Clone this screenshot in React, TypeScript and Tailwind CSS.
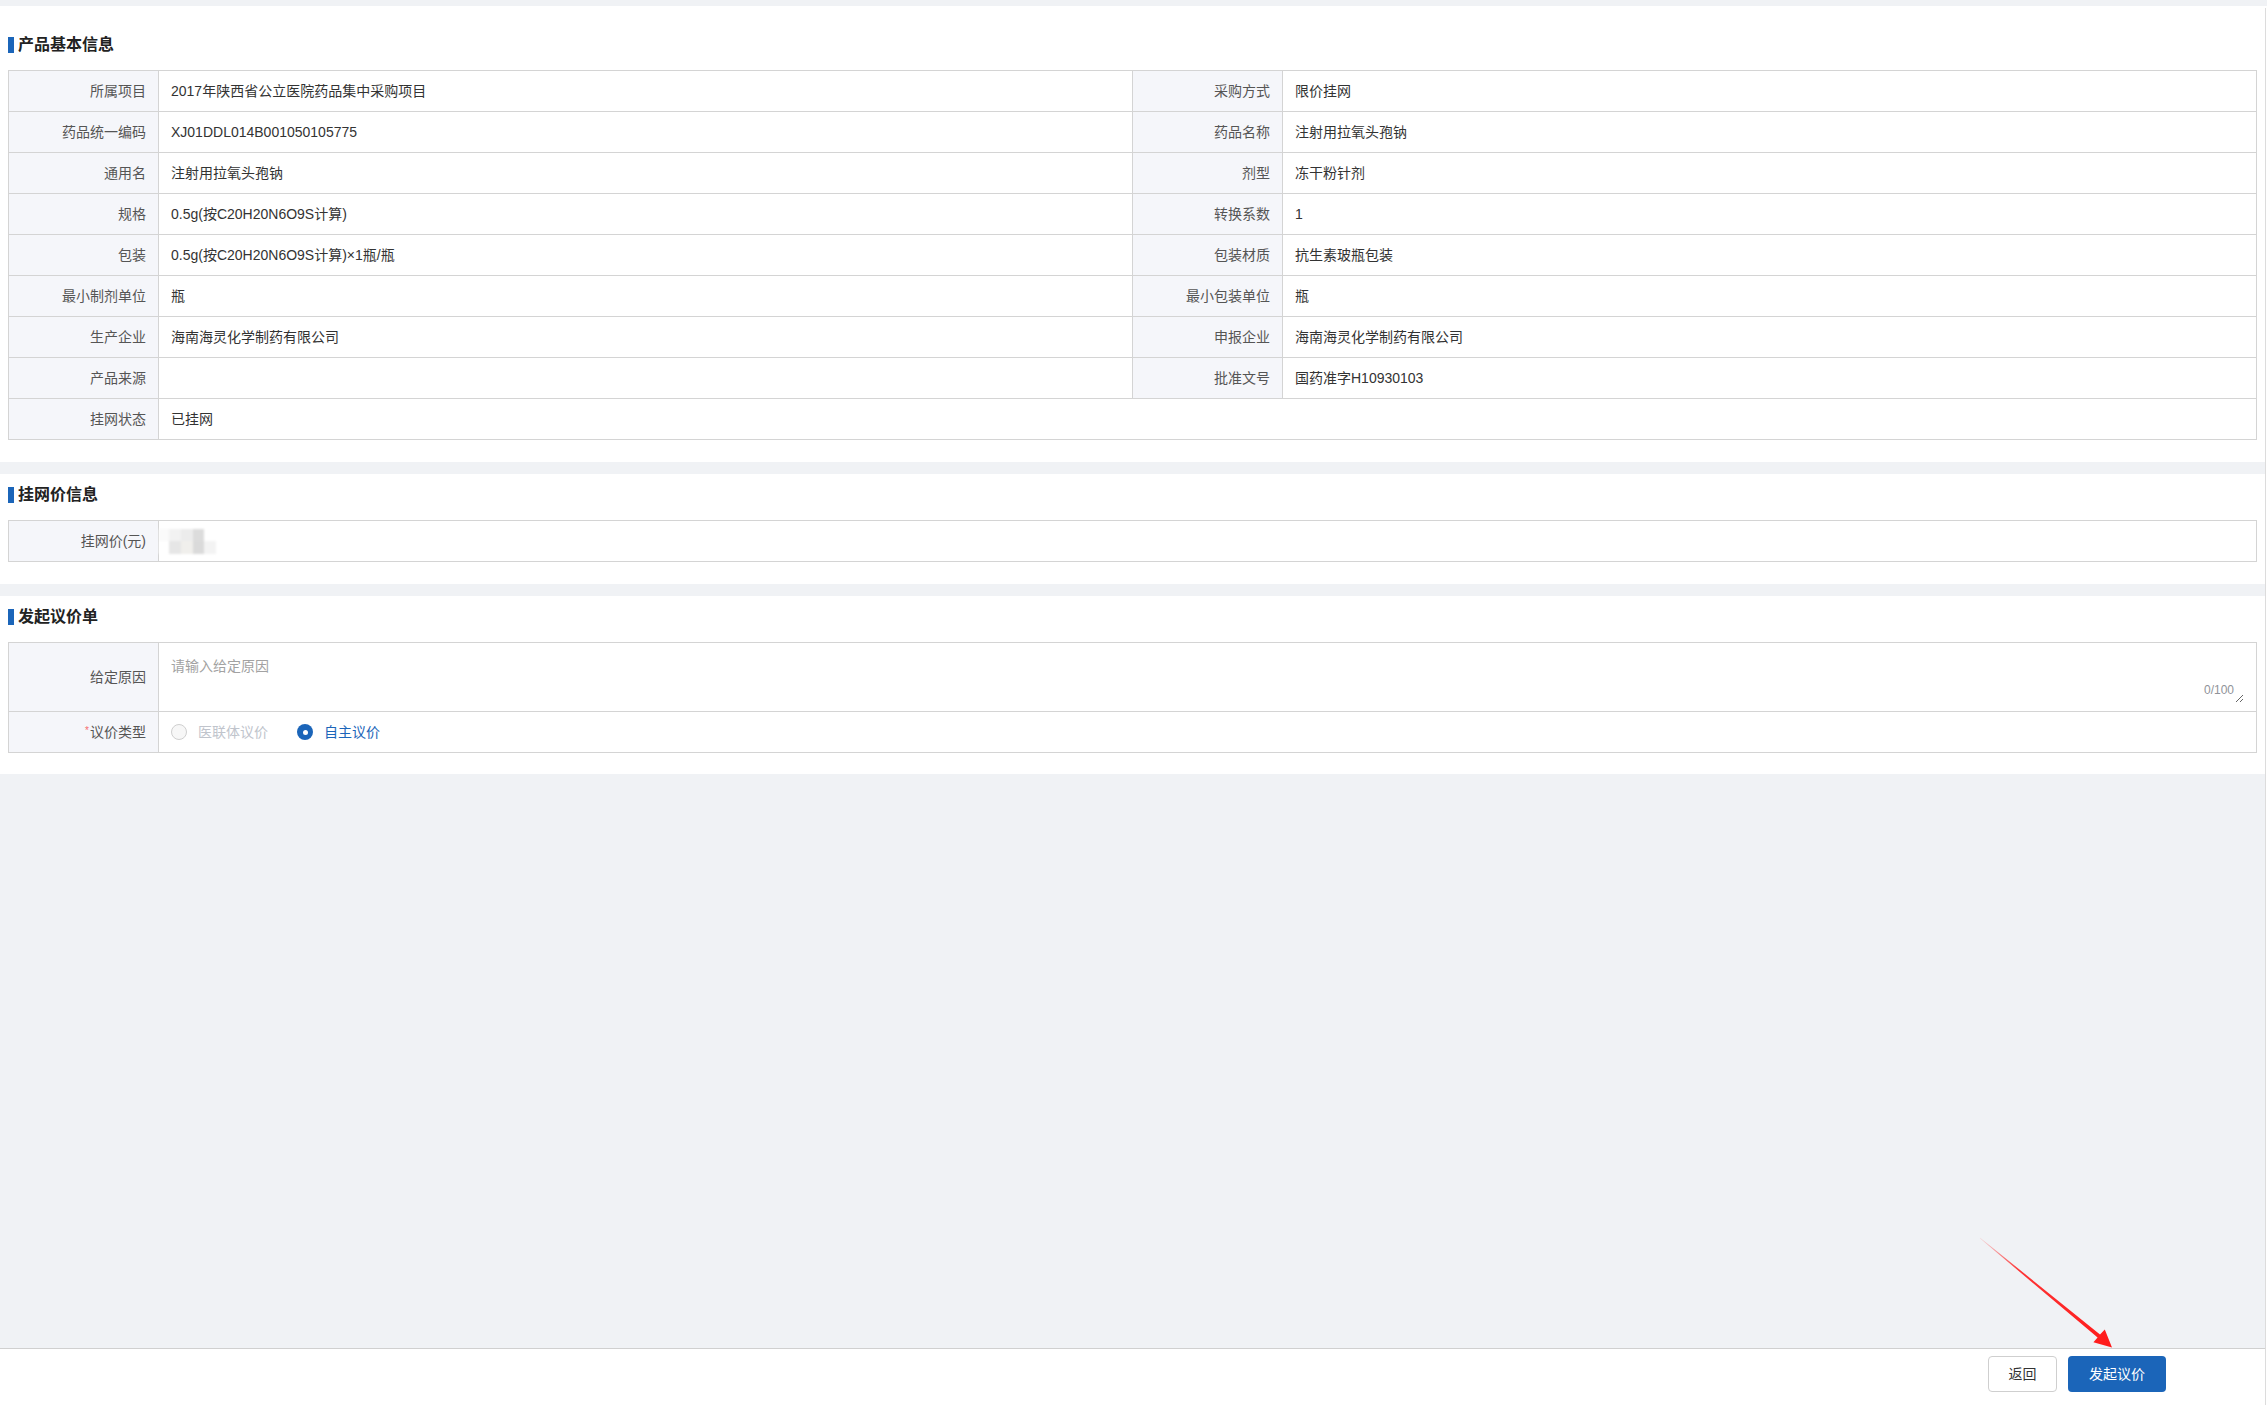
import React from "react";

const rows: string[][] = [
  ["所属项目", "2017年陕西省公立医院药品集中采购项目", "采购方式", "限价挂网"],
  ["药品统一编码", "XJ01DDL014B001050105775", "药品名称", "注射用拉氧头孢钠"],
  ["通用名", "注射用拉氧头孢钠", "剂型", "冻干粉针剂"],
  ["规格", "0.5g(按C20H20N6O9S计算)", "转换系数", "1"],
  ["包装", "0.5g(按C20H20N6O9S计算)×1瓶/瓶", "包装材质", "抗生素玻瓶包装"],
  ["最小制剂单位", "瓶", "最小包装单位", "瓶"],
  ["生产企业", "海南海灵化学制药有限公司", "申报企业", "海南海灵化学制药有限公司"],
  ["产品来源", "", "批准文号", "国药准字H10930103"],
];

const labelCls =
  "h-[41px] border-r border-b border-[#d4d4d4] bg-[#f5f6fa] flex items-center justify-end pr-[12px] text-[#555555] whitespace-nowrap";
const valueCls =
  "h-[41px] border-r border-b border-[#d4d4d4] bg-white flex items-center pl-[12px] text-[#333333] whitespace-nowrap";

function Title({ text }: { text: string }) {
  return (
    <div className="flex items-center h-[22px] mb-[14px]">
      <div className="w-[6px] h-[16px] bg-[#1b65b9]" />
      <div className="ml-[4px] text-[16px] font-bold text-[#222222] leading-[22px]">{text}</div>
    </div>
  );
}

export default function App() {
  return (
    <div className="relative h-[1405px] w-full flex flex-col bg-[#f0f2f5] font-['Liberation_Sans','Noto_Sans_CJK_SC',sans-serif] text-[14px]">
      <div className="h-[6px] shrink-0" />
      <div className="flex flex-1 min-h-0">
        <div className="flex-1 flex flex-col min-w-0">
          {/* Card 1 */}
          <div className="bg-white pl-[8px] pr-[8px] pt-[28px] pb-[22px]">
            <Title text="产品基本信息" />
            <div className="grid grid-cols-[150px_1fr_150px_1fr] border-l border-t border-[#d4d4d4]">
              {rows.map((r, i) => (
                <React.Fragment key={i}>
                  <div className={labelCls}>{r[0]}</div>
                  <div className={valueCls}>{r[1]}</div>
                  <div className={labelCls}>{r[2]}</div>
                  <div className={valueCls}>{r[3]}</div>
                </React.Fragment>
              ))}
              <div className={labelCls}>挂网状态</div>
              <div className={valueCls + " col-span-3"}>已挂网</div>
            </div>
          </div>

          {/* Card 2 */}
          <div className="bg-white mt-[12px] pl-[8px] pr-[8px] pt-[10px] pb-[22px]">
            <Title text="挂网价信息" />
            <div className="grid grid-cols-[150px_1fr] border-l border-t border-[#d4d4d4]">
              <div className={labelCls}>挂网价(元)</div>
              <div className={valueCls}>
                <div className="flex flex-col blur-[0.8px] -ml-[12px]">
                  <div className="flex h-[12px]">
                    <div className="w-[10px] bg-[#fafafa]" />
                    <div className="w-[12px] bg-[#f2f2f2]" />
                    <div className="w-[12px] bg-[#ececec]" />
                    <div className="w-[11px] bg-[#dcdcdc]" />
                    <div className="w-[12px] bg-[#ffffff]" />
                  </div>
                  <div className="flex h-[13px]">
                    <div className="w-[10px] bg-white" />
                    <div className="w-[12px] bg-[#e6e6e6]" />
                    <div className="w-[12px] bg-[#f0efec]" />
                    <div className="w-[11px] bg-[#dadada]" />
                    <div className="w-[12px] bg-[#f3f3f3]" />
                  </div>
                </div>
              </div>
            </div>
          </div>

          {/* Card 3 */}
          <div className="bg-white mt-[12px] pl-[8px] pr-[8px] pt-[10px] pb-[21px]">
            <Title text="发起议价单" />
            <div className="grid grid-cols-[150px_1fr] border-l border-t border-[#d4d4d4]">
              <div className={labelCls.replace("h-[41px]", "h-[69px]")}>给定原因</div>
              <div className="h-[69px] border-r border-b border-[#d4d4d4] bg-white pl-[12px] pr-[12px] pt-[8px] pb-[8px]">
                <div className="relative h-full">
                  <textarea
                    className="block w-full h-full py-[5px] px-0 text-[14px] leading-[21px] outline-none border-0 resize-y text-[#333333] placeholder:text-[#a2a2a2] font-['Liberation_Sans','Noto_Sans_CJK_SC',sans-serif]"
                    placeholder="请输入给定原因"
                  />
                  <span className="absolute right-[10px] bottom-[7px] text-[12px] leading-[12px] text-[#909399]">
                    0/100
                  </span>
                </div>
              </div>
              <div className={labelCls}>
                <span className="text-[#f56c6c] text-[10px] leading-[10px] self-start mt-[14px] mr-[1px]">*</span>
                议价类型
              </div>
              <div className={valueCls}>
                <div className="flex items-center">
                  <span className="w-[16px] h-[16px] rounded-full border border-[#cfcfcf] bg-[#f7f7f7]" />
                  <span className="ml-[11px] text-[#c0c4cc]">医联体议价</span>
                </div>
                <div className="flex items-center ml-[29px]">
                  <span className="w-[16px] h-[16px] rounded-full bg-[#1b65b9] flex items-center justify-center">
                    <span className="w-[5px] h-[5px] rounded-full bg-white" />
                  </span>
                  <span className="ml-[11px] text-[#1b65b9]">自主议价</span>
                </div>
              </div>
            </div>
          </div>

          <div className="flex-1" />

          {/* Footer */}
          <div className="h-[57px] shrink-0 bg-white border-t border-[#d0d0d0] flex justify-end items-start pt-[7px] pr-[99px]">
            <button className="w-[69px] h-[36px] rounded-[4px] border border-[#cfcfcf] bg-white text-[14px] text-[#333333]">
              返回
            </button>
            <button className="ml-[11px] w-[98px] h-[36px] rounded-[4px] bg-[#1b65b9] text-[14px] text-white">
              发起议价
            </button>
          </div>
        </div>
        <div className="w-[2px] shrink-0 bg-white pt-[2px] flex flex-col">
          <div className="flex-1 border-l border-[#dcdcdc]" />
        </div>
      </div>

      {/* annotation arrow */}
      <svg
        className="absolute pointer-events-none"
        style={{ left: 1970, top: 1230 }}
        width="150"
        height="125"
        viewBox="0 0 150 125"
      >
        <defs>
          <linearGradient id="arrowGrad" x1="10" y1="8" x2="140" y2="116" gradientUnits="userSpaceOnUse">
            <stop offset="0" stopColor="#ff2020" stopOpacity="0.1" />
            <stop offset="0.3" stopColor="#ff2020" stopOpacity="0.9" />
            <stop offset="1" stopColor="#ff1a1a" stopOpacity="1" />
          </linearGradient>
        </defs>
        <polygon
          points="10.2,7.8 130.0,104.6 134.8,99.6 142,117.4 123.4,112.2 127.6,107.6 9.8,8.2"
          fill="url(#arrowGrad)"
        />
      </svg>
    </div>
  );
}
